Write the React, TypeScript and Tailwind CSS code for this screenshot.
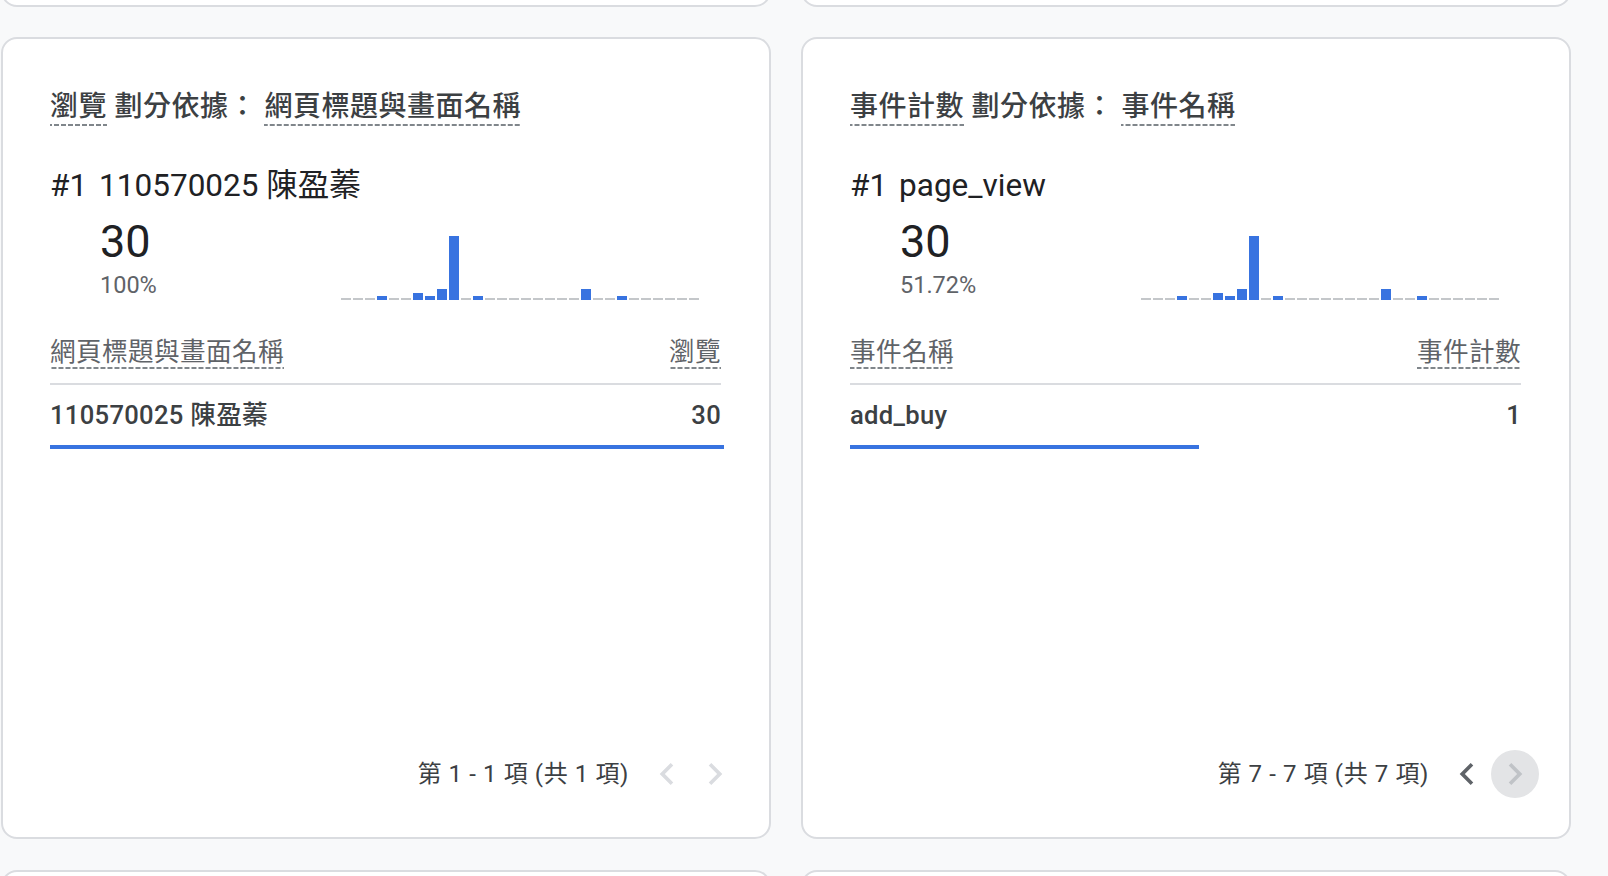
import React from "react";

const BARS = [0, 0, 0, 4, 0, 0, 7, 4, 11, 64, 0, 4, 0, 0, 0, 0, 0, 0, 0, 0, 11, 0, 0, 4, 0, 0, 0, 0, 0, 0];

function Dashed({ children }: { children: React.ReactNode }) {
  return (
    <span className="inline-block pb-[1px] bg-[linear-gradient(to_right,#80868b_0,#80868b_5px,transparent_5px)] bg-[length:7px_2px] bg-repeat-x bg-bottom">
      {children}
    </span>
  );
}

function Chevron({ dir, color }: { dir: "left" | "right"; color: string }) {
  return (
    <svg width="44" height="44" viewBox="0 0 24 24" fill={color}>
      {dir === "left" ? (
        <path d="M15.41 7.41L14 6l-6 6 6 6 1.41-1.41L10.83 12z" />
      ) : (
        <path d="M8.59 16.59L10 18l6-6-6-6-1.41 1.41L13.17 12z" />
      )}
    </svg>
  );
}

type CardProps = {
  metric: string;
  dim: string;
  heading: string;
  value: string;
  pct: string;
  rowName: string;
  rowVal: string;
  barPct: number;
  pageText: string;
  active: boolean;
};

function Card(p: CardProps) {
  return (
    <div className="w-[770px] h-[802px] shrink-0 bg-white border-2 border-[#dadce0] rounded-[16px] flex flex-col pl-[47px] pr-[48px] pt-[50px] pb-[39px]">
      <div className="text-[28px] leading-[36px] text-[#3c4043] font-medium tracking-[0.5px]">
        <Dashed>{p.metric}</Dashed> 劃分依據： <Dashed>{p.dim}</Dashed>
      </div>
      <div className="mt-[40px] text-[31.5px] leading-[40px] text-[#202124] flex">
        <span className="mr-[12px]">#1</span>
        <span>{p.heading}</span>
      </div>
      <div className="mt-[10px] flex items-end">
        <div className="ml-[50px] w-[241px] flex flex-col">
          <div className="text-[45px] leading-[52px] text-[#202124]">{p.value}</div>
          <div className="mt-[3px] text-[23.5px] leading-[28px] text-[#5f6368]">{p.pct}</div>
        </div>
        <div className="flex items-end gap-[2px] h-[64px] mb-[-1px]">
          {BARS.map((h, i) => (
            <div
              key={i}
              className={h > 0 ? "w-[10px] bg-[#3873e0]" : "w-[10px] bg-[#c4c7ca]"}
              style={{ height: h > 0 ? h : 2 }}
            />
          ))}
        </div>
      </div>
      <div className="mt-[37px] flex justify-between pb-[14px] border-b-2 border-[#dadce0] text-[25.6px] leading-[32px] text-[#5f6368] tracking-[0.4px]">
        <Dashed>{p.dim}</Dashed>
        <Dashed>{p.metric}</Dashed>
      </div>
      <div className="mt-[14px] flex justify-between text-[25.6px] leading-[32px] text-[#3c4043] font-medium tracking-[0.3px]">
        <span>{p.rowName}</span>
        <span>{p.rowVal}</span>
      </div>
      <div className="mt-[14px] h-[4px] w-[calc(100%+3px)]">
        <div className="h-full bg-[#3873e0]" style={{ width: `${p.barPct}%` }} />
      </div>
      <div className="mt-auto -mr-[18px] flex items-center justify-end">
        <span className="text-[24px] leading-[32px] text-[#3c4043] tracking-[0.6px] mr-[14px]">{p.pageText}</span>
        <div className="w-[48px] h-[48px] rounded-full flex items-center justify-center">
          <Chevron dir="left" color={p.active ? "#5f6368" : "#dadce0"} />
        </div>
        <div
          className={
            p.active
              ? "w-[48px] h-[48px] rounded-full flex items-center justify-center bg-[#e3e4e6]"
              : "w-[48px] h-[48px] rounded-full flex items-center justify-center"
          }
        >
          <Chevron dir="right" color={p.active ? "#c0c3c7" : "#dadce0"} />
        </div>
      </div>
    </div>
  );
}

export default function App() {
  return (
    <div className="w-[1608px] h-[876px] overflow-hidden bg-[#f8f9fa] font-[Roboto,'Noto_Sans_CJK_TC',sans-serif]">
      <div className="flex gap-[30px] pl-[1px] -mt-[93px]">
        <div className="w-[770px] h-[100px] bg-white border-2 border-[#dadce0] rounded-[16px]" />
        <div className="w-[770px] h-[100px] bg-white border-2 border-[#dadce0] rounded-[16px]" />
      </div>
      <div className="flex gap-[30px] pl-[1px] mt-[30px]">
        <Card
          metric="瀏覽"
          dim="網頁標題與畫面名稱"
          heading="110570025 陳盈蓁"
          value="30"
          pct="100%"
          rowName="110570025 陳盈蓁"
          rowVal="30"
          barPct={100}
          pageText="第 1 - 1 項 (共 1 項)"
          active={false}
        />
        <Card
          metric="事件計數"
          dim="事件名稱"
          heading="page_view"
          value="30"
          pct="51.72%"
          rowName="add_buy"
          rowVal="1"
          barPct={51.72}
          pageText="第 7 - 7 項 (共 7 項)"
          active={true}
        />
      </div>
      <div className="flex gap-[30px] pl-[1px] mt-[31px]">
        <div className="w-[770px] h-[100px] bg-white border-2 border-[#dadce0] rounded-[16px]" />
        <div className="w-[770px] h-[100px] bg-white border-2 border-[#dadce0] rounded-[16px]" />
      </div>
    </div>
  );
}
